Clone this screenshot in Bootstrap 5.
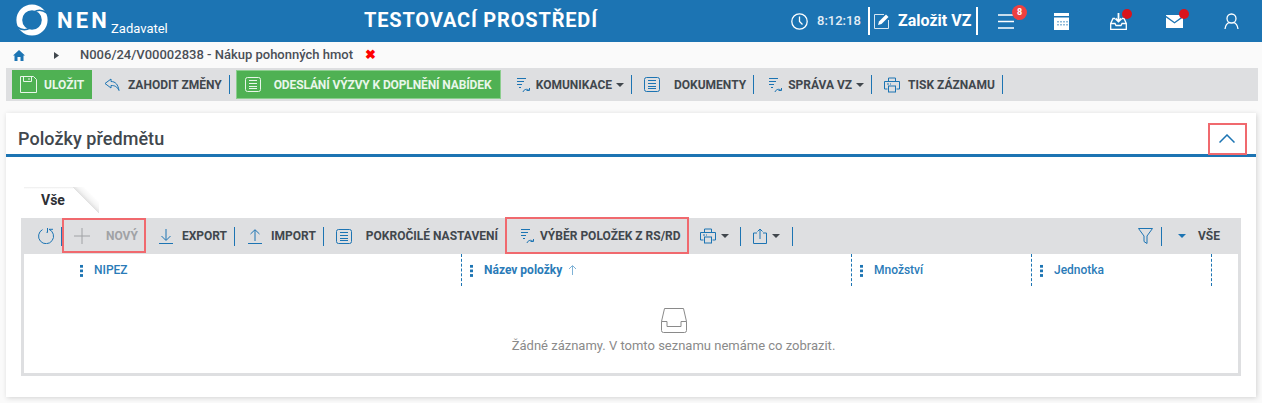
<!DOCTYPE html>
<html lang="cs">
<head>
<meta charset="UTF-8" />
<title>NEN - Položky předmětu</title>
<link href="https://cdn.jsdelivr.net/npm/bootstrap@5.3.0/dist/css/bootstrap.min.css" rel="stylesheet" />
<style>
body { background: #fafafa; font-family: Roboto, "Liberation Sans", sans-serif; color: #41474d; height: 403px; overflow: hidden; }
.app-head { height: 42px; background: #1c74b3; color: #fff; position: relative; }
.app-logo { margin-left: 16px; margin-top: -2px; width: 32px; height: 32px; }
.app-name { margin-left: 9px; font-size: 22px; font-weight: 700; letter-spacing: 3.2px; line-height: 1; }
.app-role { margin-left: 1px; margin-top: 16px; font-size: 13px; width: 60px; }
.app-title { position: absolute; left: 364px; top: 8px; font-size: 20px; font-weight: 700; letter-spacing: .82px; line-height: 25px; }
.head-tools { position: absolute; left: 791px; top: 0; height: 42px; }
.head-time { font-size: 13px; font-weight: 500; margin-left: 9px; width: 51px; color: #e4eef6; }
.head-sep { width: 2px; height: 28px; background: #fff; }
.head-new { font-size: 16px; font-weight: 700; width: 78px; margin-left: 8px; white-space: nowrap; }
.head-btn { position: relative; width: 17px; height: 17px; }
.head-btn svg { display: block; }
.head-count { position: absolute; left: 14px; top: -8px; width: 15px; height: 15px; padding: 0; border-radius: 50%; background: #ef4040; font-size: 9px; line-height: 15px; }
.head-dot { position: absolute; left: 12px; top: -4px; width: 10px; height: 10px; border-radius: 50%; background: #d9141c; }
.crumbs { height: 26px; font-size: 13px; font-weight: 500; color: #4a4f57; }
.crumb-x { color: #f00; font-size: 13px; font-weight: 900; margin-left: 12px; }
.tool-bar { background: #dedfe1; }
.tool-main { height: 33px; margin: 0 4px 0 6px; padding: 2px 0 2px 6px; }
.tool-item { font-size: 12px; font-weight: 700; color: #41474d; white-space: nowrap; display: flex; align-items: center; height: 29px; }
.tool-item svg, .grid-bar > svg { flex: none; color: #1c74b3; }
.tool-sep { width: 1px; height: 19px; background: #1c74b3; flex: none; }
.tool-green { background: #4fb153; color: #e9f6ea; border: 1px solid #4fb153; }
.tool-green svg { color: #e9f6ea; }
.tool-green.soft { border-color: #8cce8e; letter-spacing: -.12px; }
.tool-off { color: #a0a2a5; }
.caret-down { width: 0; height: 0; border-left: 4px solid transparent; border-right: 4px solid transparent; border-top: 4px solid #41474d; flex: none; }
.caret-blue { border-top-color: #1c74b3; }
.panel-box { margin: 12px 6px 0; height: 284px; background: #fff; box-shadow: 1px 1px 5px rgba(0,0,0,.16); position: relative; }
.panel-head { height: 44px; border-bottom: 3px solid #1c74b3; padding: 13px 12px 0; }
.panel-title { font-size: 18px; font-weight: 500; color: #41474d; line-height: 26px; margin: 0; letter-spacing: .05px; }
.panel-toggle { position: absolute; right: 21px; top: 21px; }
.tab-strip { padding: 30px 15px 0; height: 61px; }
.tab-one { position: relative; width: 78px; height: 26px; font-size: 14px; font-weight: 700; color: #2d3035; padding: 3px 0 0 20px; }
.tab-one::before { content: ""; position: absolute; left: 3px; right: 26px; top: 0; height: 2px; background: linear-gradient(#ececec, #fff); }
.tab-one::after { content: ""; position: absolute; right: 0; top: 0; width: 26px; height: 26px; background: linear-gradient(to top right, #fff 0, #fff 48%, #e2e2e2 50%, #f3f3f3 58%, #fff 72%); }
.grid-box { margin: 0 15px; height: 158px; border: 3px solid #dedfe1; border-top: 0; }
.grid-bar { height: 36px; margin: 0 -3px; padding: 0 21px 0 0; }
.grid-head { height: 32px; font-size: 12px; font-weight: 500; color: #2a7bb8; }
.grid-col { height: 32px; border-right: 1px dashed #1c74b3; padding-left: 8px; gap: 11px; flex: none; }
.kebab { width: 3px; height: 13px; background: radial-gradient(circle, #1c74b3 1.5px, transparent 1.7px) 0 0 / 3px 4.6px repeat-y; }
.grid-empty { color: #8a8a8a; font-size: 13px; padding: 22px 0 0 85px; line-height: 19px; }
.note-box { position: absolute; border: 2px solid #f0696e; pointer-events: none; }
.w-a { width: 438px; } .w-b { width: 390px; } .w-c { width: 180px; }
</style>
</head>
<body>
<svg width="0" height="0" class="d-block">
  <defs>
    <g id="i-doc" fill="none" stroke="currentColor" stroke-width="1"><rect x=".5" y="1.500" width="15" height="14" rx="2"/><path d="M4 4.500h8M4 7.500h8M4 10.500h8M4 12.500h8"/></g>
    <g id="i-sort" fill="none" stroke="currentColor" stroke-width="1"><path d="M1 1.500h9M1 4.500h7M1 7.500h5M3 10.500h2"/><path d="M7 15c1-3 4.500-3.500 6-1.500"/><path d="M10.500 13.500h3v-2.500"/></g>
    <g id="i-print" fill="none" stroke="currentColor" stroke-width="1"><path d="M4.500 4V1h7v3M3.500 12H.5V4.500h15V12h-3"/><rect x="4.500" y="9" width="7" height="6"/><path d="M3 7h2M6 7h1" stroke-width="1.200"/></g>
  </defs>
</svg>

<header class="app-head d-flex align-items-center">
  <svg class="app-logo" viewBox="0 0 32 32">
    <circle cx="16" cy="16" r="12.700" fill="none" stroke="#fff" stroke-width="5.800"/>
    <path d="M18 8C22 5.500 26 5.500 31 9M14 24C10 26.500 6 26.500 1 23" fill="none" stroke="#1c74b3" stroke-width="1.600"/>
  </svg>
  <span class="app-name">NEN</span>
  <span class="app-role">Zadavatel</span>
  <span class="app-title">TESTOVACÍ PROSTŘEDÍ</span>
  <div class="head-tools d-flex align-items-center">
    <svg width="17" height="17" viewBox="0 0 17 17" fill="none" stroke="#fff" stroke-width="1.300"><circle cx="8.500" cy="8.500" r="7.700"/><path d="M8.500 3.500v5l3 3"/></svg>
    <span class="head-time">8:12:18</span>
    <span class="head-sep"></span>
    <svg class="ms-1" width="16" height="16" viewBox="0 0 16 16"><path d="M10 1.500H.5v14h14V7" fill="none" stroke="#d7e6f1" stroke-width="1"/><path d="M4 12l1-3.500 7-7 2.500 2.500-7 7z" fill="#fff"/></svg>
    <span class="head-new">Založit VZ</span>
    <span class="head-sep"></span>
    <span class="head-btn" style="margin-left:20px">
      <svg width="17" height="17" viewBox="0 0 17 17" stroke="#fff" stroke-width="1.400"><path d="M0 2h16M0 8.500h16M0 15h16"/></svg>
      <span class="badge head-count">8</span>
    </span>
    <span class="head-btn" style="margin-left:38px">
      <svg width="17" height="17" viewBox="0 0 17 17"><path fill="#fff" d="M1 0h15v3H1zM1 4.500h15V17H1z"/><path stroke="#1c74b3" d="M5 8v1.500M8 8v1.500M11 8v1.500M5 11v1.500M8 11v1.500M11 11v1.500M14 8v1.500M14 11v1.500"/></svg>
    </span>
    <span class="head-btn" style="margin-left:40px">
      <svg width="17" height="17" viewBox="0 0 17 17" fill="none" stroke="#fff" stroke-width="1.300"><path d="M5 5.500H3L.7 10.500v6h15.600v-6L14 5.500h-2M1 10.500h4l1 2h5l1-2h4"/><path d="M8.500 0v8.500M5.500 5.500l3 3 3-3" stroke-width="1.800"/></svg>
      <span class="head-dot"></span>
    </span>
    <span class="head-btn" style="margin-left:39px">
      <svg width="17" height="17" viewBox="0 0 17 17"><path fill="#fff" d="M0 2h17v.8L8.500 9 0 2.800zM0 4.600l8.500 6L17 4.600V15H0z"/></svg>
      <span class="head-dot" style="left:13px"></span>
    </span>
    <span class="head-btn" style="margin-left:41px">
      <svg width="17" height="17" viewBox="0 0 17 17" fill="none" stroke="#fff" stroke-width="1.300"><circle cx="7.500" cy="5.500" r="4.500"/><path d="M1 16c.5-4 2-6 4.500-6.700M14 16c-.5-4-2-6-4.500-6.700"/></svg>
    </span>
  </div>
</header>

<nav class="crumbs d-flex align-items-center">
  <svg style="margin-left:13px" width="12" height="11" viewBox="0 0 12 11"><path fill="#1c74b3" d="M6 0l6 5.500h-1.500V11H7.500V7h-3v4H1.500V5.500H0z"/></svg>
  <svg style="margin-left:29px" width="5" height="7" viewBox="0 0 5 7"><path fill="#41474d" d="M0 0l5 3.500L0 7z"/></svg>
  <span style="margin-left:21px">N006/24/V00002838 - Nákup pohonných hmot</span>
  <span class="crumb-x">✖</span>
</nav>

<div class="tool-bar tool-main d-flex align-items-center">
  <div class="tool-item tool-green" style="width:80px;padding-left:7px">
    <svg width="17" height="17" viewBox="0 0 17 17" fill="none" stroke="currentColor"><path d="M.5.500h13l3 3v13H.5zM3.500.500v5h8v-5M9 2v2"/></svg>
    <span style="margin-left:7px">ULOŽIT</span>
  </div>
  <div class="tool-item" style="margin-left:12px">
    <svg width="16" height="14" viewBox="0 0 16 14" fill="none" stroke="currentColor"><path d="M7 1L1 5.500 7 10V7.500c4 0 6 1 8 5-1-6-3.500-9-8-9z"/></svg>
    <span style="margin-left:8px">ZAHODIT ZMĚNY</span>
  </div>
  <span class="tool-sep" style="margin-left:7px"></span>
  <div class="tool-item tool-green soft" style="margin-left:6px;width:265px;padding-left:8px">
    <svg width="16" height="17" viewBox="0 0 16 17"><use href="#i-doc"/></svg>
    <span style="margin-left:13px">ODESLÁNÍ VÝZVY K DOPLNĚNÍ NABÍDEK</span>
  </div>
  <div class="tool-item" style="margin-left:15px">
    <svg width="15" height="16" viewBox="0 0 15 16"><use href="#i-sort"/></svg>
    <span style="margin-left:5px">KOMUNIKACE</span>
    <span class="caret-down ms-1"></span>
  </div>
  <span class="tool-sep" style="margin-left:7px"></span>
  <div class="tool-item" style="margin-left:12px">
    <svg width="16" height="17" viewBox="0 0 16 17"><use href="#i-doc"/></svg>
    <span style="margin-left:14px">DOKUMENTY</span>
  </div>
  <span class="tool-sep" style="margin-left:7px"></span>
  <div class="tool-item" style="margin-left:14px">
    <svg width="15" height="16" viewBox="0 0 15 16"><use href="#i-sort"/></svg>
    <span style="margin-left:5px">SPRÁVA VZ</span>
    <span class="caret-down ms-1"></span>
  </div>
  <span class="tool-sep" style="margin-left:7px"></span>
  <div class="tool-item" style="margin-left:12px">
    <svg width="16" height="16" viewBox="0 0 16 16"><use href="#i-print"/></svg>
    <span style="margin-left:8px">TISK ZÁZNAMU</span>
  </div>
  <span class="tool-sep" style="margin-left:7px"></span>
</div>

<section class="panel-box">
  <div class="panel-head"><h2 class="panel-title">Položky předmětu</h2></div>
  <svg class="panel-toggle" width="16" height="9" viewBox="0 0 16 9" fill="none" stroke="#1c74b3" stroke-width="1.500"><path d="M.5 8.500L8 1l7.500 7.500"/></svg>
  <div class="tab-strip"><div class="tab-one">Vše</div></div>
  <div class="grid-box">
    <div class="tool-bar grid-bar d-flex align-items-center">
      <svg style="margin-left:17px" width="16" height="16" viewBox="0 0 16 16" fill="none" stroke="currentColor"><path d="M11 1.300a7.500 7.500 0 1 1-6.500.3M9.500 -.5v5M9.500 4.500l-1-.2M11 1.300H15"/></svg>
      <span class="tool-sep" style="margin-left:7px"></span>
      <div class="tool-item tool-off" style="margin-left:12px">
        <svg width="16" height="16" viewBox="0 0 16 16" stroke="#a0a2a5"><path d="M8 0v16M0 8h16"/></svg>
        <span style="margin-left:16px">NOVÝ</span>
      </div>
      <span class="tool-sep" style="margin-left:7px"></span>
      <div class="tool-item" style="margin-left:13px">
        <svg width="14" height="15" viewBox="0 0 14 15" fill="none" stroke="currentColor"><path d="M7 0v11M2.500 7L7 11.500 11.500 7M0 14.500h14"/></svg>
        <span style="margin-left:9px">EXPORT</span>
      </div>
      <span class="tool-sep" style="margin-left:7px"></span>
      <div class="tool-item" style="margin-left:13px">
        <svg width="14" height="15" viewBox="0 0 14 15" fill="none" stroke="currentColor"><path d="M7 12V1M2.500 5L7 .7 11.500 5M0 14.500h14"/></svg>
        <span style="margin-left:9px">IMPORT</span>
      </div>
      <span class="tool-sep" style="margin-left:7px"></span>
      <div class="tool-item" style="margin-left:12px">
        <svg width="16" height="17" viewBox="0 0 16 17"><use href="#i-doc"/></svg>
        <span style="margin-left:14px">POKROČILÉ NASTAVENÍ</span>
      </div>
      <span class="tool-sep" style="margin-left:7px"></span>
      <div class="tool-item" style="margin-left:14px">
        <svg width="15" height="16" viewBox="0 0 15 16"><use href="#i-sort"/></svg>
        <span style="margin-left:5px">VÝBĚR POLOŽEK Z RS/RD</span>
      </div>
      <span class="tool-sep" style="margin-left:7px"></span>
      <svg style="margin-left:11px" width="16" height="16" viewBox="0 0 16 16"><use href="#i-print"/></svg>
      <span class="caret-down" style="margin-left:5px"></span>
      <span class="tool-sep" style="margin-left:11px"></span>
      <svg style="margin-left:12px" width="14" height="16" viewBox="0 0 14 16" fill="none" stroke="currentColor"><path d="M4 5H.5v10.500h13V5H10M7 11V1M4.500 3.500L7 1l2.500 2.500"/></svg>
      <span class="caret-down" style="margin-left:5px"></span>
      <span class="tool-sep" style="margin-left:12px"></span>
      <svg class="ms-auto" width="15" height="16" viewBox="0 0 15 16" fill="none" stroke="currentColor"><path d="M.5.500h14L9 8v7.500l-3-2V8z"/></svg>
      <span class="tool-sep" style="margin-left:8px"></span>
      <span class="caret-down caret-blue" style="margin-left:16px"></span>
      <span class="tool-item" style="margin-left:12px">VŠE</span>
    </div>
    <div class="grid-head d-flex">
      <div class="grid-col w-a d-flex align-items-center" style="padding-left:56px"><span class="kebab"></span>NIPEZ</div>
      <div class="grid-col w-b d-flex align-items-center"><span class="kebab"></span><span class="fw-bold">Název položky</span><svg style="margin-left:-5px" width="9" height="10" viewBox="0 0 9 10" fill="none" stroke="#7fb2d6"><path d="M4.500 10V1M1 4l3.500-3.500L8 4"/></svg></div>
      <div class="grid-col w-c d-flex align-items-center"><span class="kebab"></span>Množství</div>
      <div class="grid-col w-c d-flex align-items-center"><span class="kebab"></span>Jednotka</div>
    </div>
    <div class="grid-empty text-center">
      <svg width="26" height="25" viewBox="0 0 26 25" fill="none" stroke="#8a8a8a" class="d-block mx-auto"><path d="M3.500.5h19l3 13v9a2 2 0 0 1-2 2h-21a2 2 0 0 1-2-2v-9zM.5 13.500h5.500v5h14v-5h5.500"/></svg>
      <div style="margin-top:3px">Žádné záznamy. V tomto seznamu nemáme co zobrazit.</div>
    </div>
  </div>
  <span class="note-box" style="left:56px;top:105px;width:84px;height:35px"></span>
  <span class="note-box" style="left:499px;top:104px;width:184px;height:37px"></span>
  <span class="note-box" style="left:1202px;top:10px;width:39px;height:32px"></span>
</section>
<script src="https://cdn.jsdelivr.net/npm/bootstrap@5.3.0/dist/js/bootstrap.bundle.min.js"></script>
</body>
</html>
